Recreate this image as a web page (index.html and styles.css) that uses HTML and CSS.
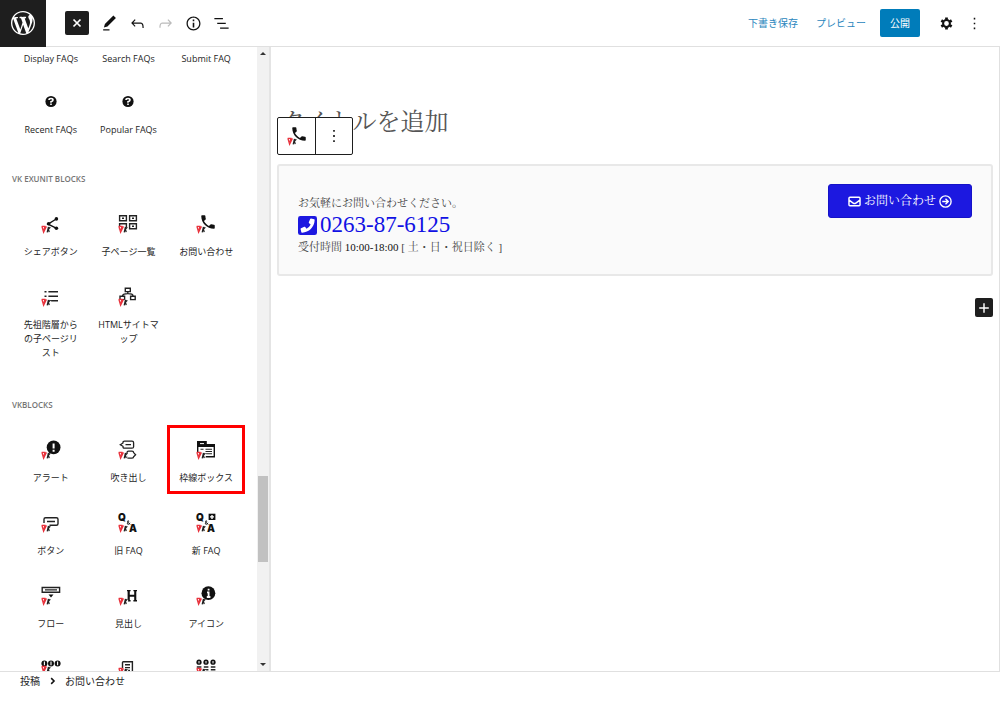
FILE: index.html
```html
<!DOCTYPE html>
<html lang="ja">
<head>
<meta charset="utf-8">
<title>お問い合わせ</title>
<link rel="stylesheet" href="styles.css">
</head>
<body>
<svg class="sprite" aria-hidden="true">
  <symbol id="vk" viewBox="0 0 20 20">
    <path class="halo" d="M1.5 12.5L3 18L5 13M7.4 13L6.4 18M8.8 13.5L8 17.8"/>
    <path fill="none" stroke="#e8323c" stroke-width="1.3" d="M.9 12.2L2.6 18.2L5.4 12.4M.7 12.4H3.8L3 15.8"/>
    <path fill="none" stroke="#222" stroke-width="1.3" d="M7.5 12.8L6.2 18.4M6.9 15.6L9.3 13.2M7.5 15.4L8.2 18.2"/>
  </symbol>
  <symbol id="phone" viewBox="0 0 24 24"><path d="M6.62 10.79c1.44 2.83 3.76 5.14 6.59 6.59l2.2-2.2c.27-.27.67-.36 1.02-.24 1.12.37 2.33.57 3.57.57.55 0 1 .45 1 1V20c0 .55-.45 1-1 1-9.39 0-17-7.61-17-17 0-.55.45-1 1-1h3.5c.55 0 1 .45 1 1 0 1.25.2 2.45.57 3.57.11.35.03.74-.25 1.02l-2.2 2.2z"/></symbol>
  <symbol id="help" viewBox="0 0 20 20"><circle cx="10" cy="9.5" r="5.6"/><path fill="none" stroke="#fff" stroke-width="1.6" d="M8 8.1Q8 6.5 10 6.5T12 8.1Q12 9.1 10 9.7V10.7M10 11.5V13.1"/></symbol>
  <symbol id="dots" viewBox="0 0 20 20"><path d="M9.2 4h1.6v1.8H9.2zM9.2 9.1h1.6v1.8H9.2zM9.2 14.2h1.6V16H9.2z"/></symbol>
  <symbol id="amp" viewBox="0 0 20 20"><path fill="none" stroke="#111" stroke-width=".9" d="M12.2 11.6L9.6 8.8Q9.4 7.7 10.4 7.7Q11.4 8.2 9.6 9.6Q8.6 11.2 10.2 11.4Q11.4 11.2 12 9.8"/></symbol>
</svg>

<header class="topbar">
  <a class="logo" href="#" aria-label="WordPress"><svg viewBox="0 0 20 20"><path d="M20 10c0-5.51-4.49-10-10-10C4.48 0 0 4.49 0 10c0 5.52 4.48 10 10 10 5.51 0 10-4.48 10-10zM7.78 15.37L4.37 6.22c.55-.02 1.17-.08 1.17-.08.5-.06.44-1.13-.06-1.11 0 0-1.45.11-2.37.11-.18 0-.37 0-.58-.01C4.12 2.69 6.87 1.11 10 1.11c2.33 0 4.45.87 6.05 2.34-.68-.11-1.65.39-1.65 1.58 0 .74.45 1.36.9 2.1.35.61.55 1.36.55 2.46 0 1.49-1.4 5-1.4 5l-3.03-8.37c.54-.02.82-.17.82-.17.5-.05.44-1.25-.06-1.22 0 0-1.44.12-2.38.12-.87 0-2.33-.12-2.33-.12-.5-.03-.56 1.2-.06 1.22l.92.08 1.26 3.41zM17.41 10c.24-.64.74-1.87.43-4.25.7 1.29 1.05 2.71 1.05 4.25 0 3.29-1.73 6.24-4.4 7.78.97-2.59 1.94-5.2 2.92-7.78zM6.1 18.09C3.12 16.65 1.11 13.53 1.11 10c0-1.3.23-2.48.72-3.59C3.25 10.3 4.67 14.2 6.1 18.09zm4.03-6.63l2.58 6.98c-.86.29-1.76.45-2.71.45-.79 0-1.57-.11-2.29-.33.81-2.38 1.62-4.74 2.42-7.1z"/></svg></a>
  <div class="tools">
    <button class="close" aria-label="閉じる"><svg viewBox="0 0 20 20"><path d="M6.5 6.5l7 7m0-7l-7 7" fill="none" stroke="#fff" stroke-width="1.7"/></svg></button>
    <button class="tool" aria-label="編集"><svg viewBox="0 0 24 24"><path d="M20.1 5.1L16.9 2 6.2 12.7l-1.3 4.4 4.5-1.3L20.1 5.1zM4 20.8h8v-1.5H4v1.5z"/></svg></button>
    <button class="tool" aria-label="元に戻す"><svg viewBox="0 0 24 24"><path d="M18.3 11.7c-.6-.6-1.4-.9-2.3-.9H6.7l2.9-3.3-1.1-1-4.5 5L8.5 16l1-1-2.7-2.7H16c.5 0 .9.2 1.3.5 1 1 1 3.4 1 4.5v.3h1.5v-.2c0-1.5 0-4.3-1.5-5.7z"/></svg></button>
    <button class="tool tool-off" aria-label="やり直す" disabled><svg viewBox="0 0 24 24"><path d="M15.6 6.5l-1.1 1 2.9 3.3H8c-.9 0-1.7.3-2.3.9-1.4 1.5-1.4 4.2-1.4 5.6v.2h1.5v-.3c0-1.1 0-3.5 1-4.5.3-.3.7-.5 1.3-.5h9.2L14.5 15l1.1 1.1 4.6-4.6-4.6-5z"/></svg></button>
    <button class="tool" aria-label="詳細"><svg viewBox="0 0 24 24"><path d="M12 3.2c-4.8 0-8.8 3.9-8.8 8.8 0 4.8 3.9 8.8 8.8 8.8 4.8 0 8.8-3.9 8.8-8.8 0-4.8-4-8.8-8.8-8.8zm0 16c-4 0-7.2-3.3-7.2-7.2C4.8 8 8 4.8 12 4.8s7.2 3.3 7.2 7.2c0 4-3.2 7.2-7.2 7.2zM11 17h2v-6h-2v6zm0-8h2V7h-2v2z"/></svg></button>
    <button class="tool" aria-label="リスト表示"><svg viewBox="0 0 24 24"><path d="M13.8 5.2H3v1.5h10.8V5.2zm-3.6 12v1.5H21v-1.5H10.2zm7.2-6H6.6v1.5h10.8v-1.5z"/></svg></button>
  </div>
  <div class="actions">
    <button class="text-button">下書き保存</button>
    <button class="text-button">プレビュー</button>
    <button class="publish">公開</button>
    <button class="tool gear" aria-label="設定"><svg viewBox="0 0 20 20"><circle cx="10" cy="10" r="4" fill="none" stroke="#111" stroke-width="2.4"/><path fill="none" stroke="#111" stroke-width="3.2" d="M10 3V5.5M10 14.5V17M3.9 6.5L6.1 7.8M13.9 12.2L16.1 13.5M3.9 13.5L6.1 12.2M13.9 7.8L16.1 6.5"/></svg></button>
    <button class="tool" aria-label="オプション"><svg viewBox="0 0 20 20"><use href="#dots"/></svg></button>
  </div>
</header>

<div class="workspace">
  <aside class="inserter">
    <div class="blocks">
      <div class="grid grid-faq">
        <button class="block block-label">Display FAQs</button>
        <button class="block block-label">Search FAQs</button>
        <button class="block block-label">Submit FAQ</button>
        <button class="block"><svg viewBox="0 0 20 20"><use href="#help"/></svg>Recent FAQs</button>
        <button class="block"><svg viewBox="0 0 20 20"><use href="#help"/></svg>Popular FAQs</button>
      </div>

      <h2 class="group">VK EXUNIT BLOCKS</h2>
      <div class="grid">
        <button class="block"><svg viewBox="0 0 20 20"><path fill="none" stroke="#111" stroke-width="1.4" d="M15.2 5L7 10.2L15.2 14.2"/><circle cx="15.4" cy="4.9" r="1.8"/><circle cx="15.4" cy="14.2" r="1.8"/><circle cx="7.6" cy="9.8" r="1.8"/><use href="#vk"/></svg>シェアボタン</button>
        <button class="block"><svg viewBox="0 0 20 20"><path class="line" d="M1.6 1.7h6.8v5H1.6zM11.6 1.7h6.8v5h-6.8zM1.6 9.7h6.8v5H1.6zM11.6 9.7h6.8v5h-6.8zM4 4.2h2M14 4.2h2M14 12.2h2"/><use href="#vk"/></svg>子ページ一覧</button>
        <button class="block"><svg viewBox="0 0 20 20"><use href="#phone" x="3" y="-1" width="18" height="18"/><use href="#vk"/></svg>お問い合わせ</button>
        <button class="block"><svg viewBox="0 0 20 20"><path class="line" d="M7.4 4.7H17M7.4 9.2H17M7.4 13.7H17M3.5 4.7h2M3.5 9.2h2"/><use href="#vk"/></svg>先祖階層からの子ページリスト</button>
        <button class="block"><svg viewBox="0 0 20 20"><path class="line" d="M7.3 1.2h5v3.4h-5zM12.6 9.2h4.6v3.4h-4.6zM2 9.2h4.6v3.4H2zM9.8 4.6V6.5M4.5 9Q4.5 6.6 9.8 6.6T15 9"/><use href="#vk"/></svg>HTMLサイトマップ</button>
      </div>

      <h2 class="group">VKBLOCKS</h2>
      <div class="grid">
        <button class="block"><svg viewBox="0 0 20 20"><circle cx="12.6" cy="7.4" r="6.9"/><path fill="none" stroke="#fff" stroke-width="2" d="M12.6 3.4V8.6M12.6 9.8v2"/><use href="#vk"/></svg>アラート</button>
        <button class="block"><svg viewBox="0 0 20 20"><path class="line bubble" d="M2.3 4.7L5 3V2.4Q5 1.2 6.5 1.2H14Q15.6 1.2 15.6 2.8V6.7Q15.6 8.2 14 8.2H6.5Q5 8.2 5 7V6.3zM7.5 4.7h5.5M10.5 11.2H14Q15.6 11.2 15.6 12.6L17.6 14.7L15.6 16.8Q15.6 18.2 14 18.2H10.5Q9 18.2 9 16.7V12.7Q9 11.2 10.5 11.2z"/><use href="#vk"/></svg>吹き出し</button>
        <button class="block block-marked"><svg viewBox="0 0 20 20"><path d="M1 1h9.8v3H19v13.5H8.5v-1.4h9.1V7H2.4v5H1z"/><path stroke="#fff" stroke-width="1" d="M4 3.6h4"/><path class="line thin" d="M9.5 9.3h6.5M9.5 11.5h6.5M9.5 13.7h6.5M4.5 9.3h3"/><use href="#vk"/></svg>枠線ボックス</button>
        <button class="block"><svg viewBox="0 0 20 20"><path class="line" d="M3 10V6.3Q3 4.7 4.6 4.7H15.4Q17 4.7 17 6.3V10.8Q17 12.3 15.4 12.3H8.5M6 8.5h8"/><use href="#vk"/></svg>ボタン</button>
        <button class="block"><svg viewBox="0 0 20 20"><text class="glyph" x="0" y="8">Q</text><use href="#amp"/><text class="glyph" x="11" y="19">A</text><use href="#vk"/></svg>旧 FAQ</button>
        <button class="block"><svg viewBox="0 0 20 20"><text class="glyph" x="0" y="8">Q</text><use href="#amp"/><text class="glyph" x="11" y="19">A</text><path d="M12.6.7h6.8V7h-6.8z"/><path stroke="#fff" stroke-width="1.4" d="M14 3.9h4M16 1.9V5.9"/><use href="#vk"/></svg>新 FAQ</button>
        <button class="block"><svg viewBox="0 0 20 20"><path class="line" d="M1.2 1.5h17.4v4.8H1.2zM4 3.9h12"/><path d="M7.5 8.6h5L10 11.6z"/><use href="#vk"/></svg>フロー</button>
        <button class="block"><svg viewBox="0 0 20 20"><path d="M9 4h3.6v1.3h-.8v3.5h4.4V5.3h-.8V4H19v1.3h-.7v8.8h.7v1.3h-3.6v-1.3h.8v-3.4h-4.4v3.4h.8v1.3H9v-1.3h.6V5.3H9z"/><use href="#vk"/></svg>見出し</button>
        <button class="block"><svg viewBox="0 0 20 20"><circle cx="12.4" cy="7.2" r="6.9"/><path fill="none" stroke="#fff" stroke-width="1.8" d="M12.6 2.7v1.9M11 6.4h1.6V11.6M10.8 11h3.6"/><use href="#vk"/></svg>アイコン</button>
        <button class="block" aria-label="アイコン一覧"><svg viewBox="0 0 20 20"><circle cx="3.4" cy="4.4" r="3"/><circle cx="10" cy="4.4" r="3"/><circle cx="16.6" cy="4.4" r="3"/><path stroke="#fff" stroke-width="1.1" d="M3.4 2.6v3.6M10 2.6v3.6M16.6 2.6v3.6"/><use href="#vk" y="-5"/></svg></button>
        <button class="block" aria-label="目次"><svg viewBox="0 0 20 20"><path class="line" d="M4.5 9V3.5Q4.5 2.7 5.3 2.7H14.4V14H8M7 5.7h5M7 8.6h5M9 11.4h3"/><use href="#vk" y="-3"/></svg></button>
        <button class="block" aria-label="PRブロック"><svg viewBox="0 0 20 20"><circle cx="3" cy="3.2" r="2.6"/><circle cx="10" cy="3.2" r="2.6"/><circle cx="17" cy="3.2" r="2.6"/><path stroke="#fff" stroke-width="1" d="M3 2v2.4M10 2v2.4M17 2v2.4"/><path class="line" d="M.8 8h4.6M7.8 8h4.6M14.8 8h4.6M7.8 10.8h4.6M14.8 10.8h4.6"/><use href="#vk" y="-3"/></svg></button>
      </div>
    </div>
    <div class="scrollbar" aria-hidden="true">
      <span class="arrow arrow-up"></span>
      <span class="space-before"></span>
      <span class="thumb"></span>
      <span class="space-after"></span>
      <span class="arrow arrow-down"></span>
    </div>
  </aside>

  <main class="canvas">
    <div class="title-row">
      <h1 class="title">タイトルを追加</h1>
      <div class="block-toolbar">
        <button aria-label="お問い合わせブロック"><svg viewBox="0 0 20 20"><use href="#phone" x="3" y="-1" width="18" height="18"/><use href="#vk"/></svg></button>
        <button aria-label="オプション"><svg viewBox="0 0 20 20"><use href="#dots"/></svg></button>
      </div>
    </div>
    <section class="contact">
      <div class="contact-info">
        <p>お気軽にお問い合わせください。</p>
        <p class="tel"><svg viewBox="0 0 20 20"><rect width="20" height="20" rx="2.5" fill="#1c18e0"/><path fill="#fff" d="M13.7 2.7L17 3.5Q17.6 3.7 17.5 4.4C17.2 11.5 11.5 17.2 4.4 17.5Q3.7 17.6 3.5 17L2.7 13.7Q2.6 13.1 3.2 12.8L6.6 11.4Q7.2 11.2 7.6 11.7L9 13.3C11 12.3 12.3 11 13.3 9L11.7 7.6Q11.2 7.2 11.4 6.6L12.8 3.2Q13.1 2.6 13.7 2.7z"/></svg>0263-87-6125</p>
        <p>受付時間 <span class="hours">10:00-18:00</span> [ 土・日・祝日除く ]</p>
      </div>
      <button class="contact-button">
        <svg viewBox="0 0 16 16"><path fill="none" stroke="#fff" stroke-width="1.8" d="M2.4 2.8H13.6Q14.8 2.8 14.8 4V12Q14.8 13.2 13.6 13.2H2.4Q1.2 13.2 1.2 12V4Q1.2 2.8 2.4 2.8zM1.4 6.2L6.8 10.2Q8 11 9.2 10.2L14.6 6.2"/></svg>
        お問い合わせ
        <svg viewBox="0 0 16 16"><path fill="none" stroke="#fff" stroke-width="1.7" d="M8 1.1a6.9 6.9 0 1 1 0 13.8a6.9 6.9 0 1 1 0-13.8zM4 8h7M8 4.6L11.4 8L8 11.4"/></svg>
      </button>
    </section>
    <button class="add" aria-label="ブロックを追加"><svg viewBox="0 0 20 20"><path stroke="#fff" stroke-width="1.8" d="M10 4v12M4 10h12"/></svg></button>
  </main>
</div>

<footer class="breadcrumb">
  <a href="#">投稿</a>
  <svg viewBox="0 0 10 10"><path fill="none" stroke="#111" stroke-width="1.4" d="M3.8 2.4L6.4 5L3.8 7.6"/></svg>
  <a href="#">お問い合わせ</a>
</footer>
</body>
</html>
```

FILE: styles.css
```css
* { box-sizing: border-box; }

body {
  margin: 0;
  height: 100vh;
  display: flex;
  flex-direction: column;
  overflow: hidden;
  background: #fff;
  color: #1e1e1e;
  font: 10px/14px "Open Sans", "Noto Sans CJK JP", sans-serif;
}

button {
  font: inherit;
  color: inherit;
  background: none;
  border: 0;
  padding: 0;
}

svg { display: block; fill: #111; }
.sprite { position: absolute; width: 0; height: 0; }
.line { fill: none; stroke: #222; stroke-width: 1.4; }
.thin { stroke-width: 1.1; }
.bubble { stroke-width: 1.3; }
.halo { fill: none; stroke: #fff; stroke-width: 3; }
.glyph { font: 900 10px Inter, sans-serif; }

/* Top bar */
.topbar {
  display: flex;
  align-items: center;
  flex: none;
  height: 47px;
  border-bottom: 1px solid #e0e0e0;
}
.logo {
  display: grid;
  place-items: center;
  width: 46px;
  height: 47px;
  background: #1e1e1e;
}
.logo svg { width: 24px; height: 24px; fill: #fff; }
.tools { display: flex; align-items: center; margin-left: 19px; }
.close {
  display: grid;
  place-items: center;
  width: 24px;
  height: 24px;
  margin-right: 6px;
  border-radius: 2px;
  background: #1e1e1e;
}
.close svg { width: 20px; height: 20px; }
.tool { display: grid; place-items: center; width: 28px; height: 28px; }
.tool svg { width: 19px; height: 19px; }
.tool-off svg { fill: #bbb; }
.actions { display: flex; align-items: center; margin-left: auto; margin-right: 12px; }
.text-button { color: #2a86bd; margin-right: 18px; }
.publish {
  height: 28px;
  padding: 0 10px;
  margin: 0 12px 0 -4px;
  border-radius: 2px;
  background: #007cba;
  color: #fff;
}
.gear svg { width: 17px; height: 17px; }

/* Block inserter */
.workspace { display: flex; flex: 1; min-height: 0; }
.inserter {
  display: flex;
  flex: none;
  width: 271px;
  border-right: 2px solid #e4e4e4;
}
.blocks { flex: 1; padding: 0 12px; overflow: hidden; }
.grid {
  display: grid;
  grid-template-columns: repeat(3, 1fr);
  row-gap: 4px;
  padding-bottom: 3px;
}
.grid-faq { row-gap: 2px; padding-bottom: 0; }
.block {
  display: flex;
  flex-direction: column;
  align-items: center;
  justify-content: flex-start;
  min-height: 69px;
  padding: 15px 8px 9px;
  font-size: 9px;
  text-align: center;
}
.block svg { width: 20px; height: 20px; margin-bottom: 11px; overflow: visible; }
.block-label { min-height: 0; padding-top: 5px; }
.block-marked { outline: 3px solid #f00; outline-offset: -3px; }
.group {
  margin: 25px 0 12px;
  font-size: 8px;
  line-height: 16px;
  font-weight: 600;
  color: #757575;
}

.scrollbar {
  display: flex;
  flex-direction: column;
  align-items: center;
  width: 12px;
  padding: 5px 0;
  background: #f1f1f1;
}
.arrow { border: 3px solid transparent; }
.arrow-up { border-top: 0; border-bottom-color: #333; }
.arrow-down { border-bottom: 0; border-top-color: #333; }
.space-before { flex: 421; }
.thumb { flex: 86; width: 10px; background: #c1c1c1; }
.space-after { flex: 101; }

/* Editing canvas */
.canvas {
  flex: 1;
  padding: 58px 6px 0;
  border-right: 1px solid #e0e0e0;
  font-family: "Liberation Serif", "Noto Serif CJK JP", "Noto Sans CJK JP", serif;
}
.title-row { position: relative; padding-left: 4px; }
.title {
  margin: 0;
  font-size: 24px;
  line-height: 34px;
  font-weight: 400;
  color: #555;
}
.block-toolbar {
  position: absolute;
  left: 0;
  top: 12px;
  display: grid;
  grid-template-columns: 1fr 1fr;
  width: 76px;
  height: 38px;
  border: 1px solid #1e1e1e;
  border-radius: 2px;
  background: #fff;
}
.block-toolbar button { display: grid; place-items: center; }
.block-toolbar button + button { border-left: 1px solid #1e1e1e; }
.block-toolbar svg { width: 20px; height: 20px; }

.contact {
  display: flex;
  align-items: flex-start;
  justify-content: space-between;
  margin-top: 25px;
  min-height: 112px;
  padding: 18px 19px;
  border: 2px solid #e8e8e8;
  border-radius: 3px;
  background: #fafafa;
  color: #444;
}
.contact-info { padding-top: 10px; font-size: 11px; line-height: 18px; }
.contact-info p { margin: 0; }
.contact-info .tel {
  display: flex;
  align-items: center;
  gap: 3px;
  font-size: 23px;
  line-height: 26px;
  color: #1111e4;
}
.tel svg { width: 19px; height: 19px; }
.hours { color: #111; }
.contact-button {
  display: flex;
  align-items: center;
  gap: 3px;
  height: 34px;
  padding: 0 19px;
  border: 1px solid #1512c8;
  border-radius: 3px;
  background: #1c18e0;
  color: #fff;
  font-size: 12px;
}
.contact-button svg { width: 13px; height: 13px; }
.add {
  display: grid;
  place-items: center;
  width: 18px;
  height: 19px;
  margin: 22px 0 0 auto;
  border-radius: 2px;
  background: #1e1e1e;
}
.add svg { width: 16px; height: 16px; }

/* Breadcrumb */
.breadcrumb {
  display: flex;
  align-items: flex-start;
  flex: none;
  gap: 7px;
  height: 44px;
  padding: 2px 20px;
  border-top: 1px solid #e0e0e0;
}
.breadcrumb a { color: inherit; text-decoration: none; }
.breadcrumb svg { width: 11px; height: 14px; }
```
